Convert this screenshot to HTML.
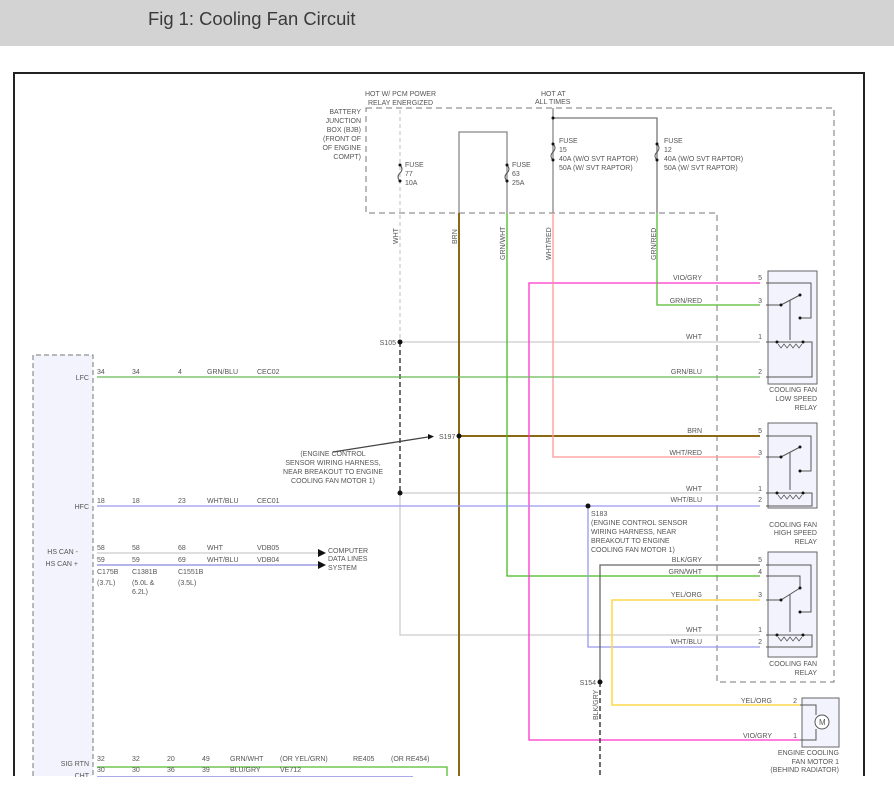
<!DOCTYPE html>
<html><head><meta charset="utf-8"><style>
html,body{margin:0;padding:0;background:#fff;width:894px;height:800px;overflow:hidden}
.hdr{position:absolute;left:0;top:0;width:894px;height:46px;background:#d3d3d3}
.hdr span{position:absolute;left:148px;top:8px;font:18.4px "Liberation Sans",sans-serif;color:#3a3a3a}
svg{position:absolute;left:0;top:0}
text{font-family:"Liberation Sans",sans-serif;font-size:7px;fill:#555}
</style></head><body>
<div class="hdr"><span>Fig 1: Cooling Fan Circuit</span></div>
<svg width="894" height="800" viewBox="0 0 894 800">
<path d="M14 776 V73 H864 V776" fill="none" stroke="#222" stroke-width="2"/>
<rect x="33" y="355" width="60" height="421" fill="#f3f3fd"/>
<path d="M33 776 V355 H93 V776" fill="none" stroke="#777" stroke-dasharray="5,3"/>
<path d="M366 108 H834 V682 H717 V213 H366 Z" fill="none" stroke="#777" stroke-dasharray="6,4"/>
<g fill="#f3f3fd" stroke="#666">
<rect x="768" y="271" width="49" height="113"/>
<rect x="768" y="423" width="49" height="85"/>
<rect x="768" y="552" width="49" height="105"/>
<rect x="802" y="698" width="37" height="49"/>
</g>
<g fill="none" stroke-width="1.3">
<path d="M400 110 V342" stroke="#ccc" stroke-dasharray="4,3"/>
<path d="M400 342 V493" stroke="#222" stroke-dasharray="5,3"/>
<path d="M400 493 V635 H760" stroke="#ccc"/>
<path d="M400 342 H760 M400 493 H760" stroke="#ccc"/>
<path d="M459 776 V132 H507 V213" stroke="#888" />
<path d="M459 213 V776 M459 436 H760" stroke="#8b6914" stroke-width="2"/>
<path d="M507 213 V576 H760" stroke="#44bb22"/>
<path d="M760 283 H529 V740 H800" stroke="#ff33cc"/>
<path d="M553 108 V213" stroke="#888"/>
<path d="M553 118 H657 V213" stroke="#777"/>
<path d="M553 213 V457 H760" stroke="#ff9999"/>
<path d="M657 213 V305 H760" stroke="#55bb33"/>
<path d="M97 377 H760" stroke="#66bb55"/>
<path d="M97 506 H760 M588 506 V647 H760" stroke="#9999ee"/>
<path d="M97 553 H318" stroke="#ccc"/>
<path d="M97 565 H318" stroke="#8888dd"/>
<path d="M760 565 H600 V682" stroke="#666"/>
<path d="M600 682 V776" stroke="#222" stroke-dasharray="5,3"/>
<path d="M760 600 H612 V705 H800" stroke="#ffd84a" stroke-width="1.5"/>
<path d="M97 767 H447 V776" stroke="#55bb33"/>
<path d="M97 777 H413" stroke="#7777dd"/>
<path d="M333 452 L428 437" stroke="#444"/>
</g>
<path d="M318 549 l8 4 l-8 4Z M318 561 l8 4 l-8 4Z M428 434 l6 2.5 l-6 3Z" fill="#111"/>
<g fill="none" stroke="#555"><path d="M400 165 q4 4 0 8 q-4 4 0 8"/><path d="M507 165 q4 4 0 8 q-4 4 0 8"/><path d="M553 144 q4 4 0 8 q-4 4 0 8"/><path d="M657 144 q4 4 0 8 q-4 4 0 8"/></g>
<g fill="#111">
<circle cx="400" cy="165" r="1.5"/><circle cx="400" cy="181" r="1.5"/><circle cx="507" cy="165" r="1.5"/><circle cx="507" cy="181" r="1.5"/>
<circle cx="553" cy="144" r="1.5"/><circle cx="553" cy="160" r="1.5"/><circle cx="657" cy="144" r="1.5"/><circle cx="657" cy="160" r="1.5"/><circle cx="553" cy="118" r="1.5"/>
<circle cx="400" cy="342" r="2.5"/><circle cx="400" cy="493" r="2.5"/><circle cx="459" cy="436" r="2.5"/><circle cx="588" cy="506" r="2.5"/><circle cx="600" cy="682" r="2.5"/>
</g>
<g fill="none" stroke="#555">
<path d="M766 283 H811 V318 H800 M766 305 H781 L800 295 M790 300 V340" />
<path d="M766 342 H803 H812 V377 H766"/>
<path d="M766 436 H811 V471 H800 M766 457 H781 L800 447 M790 452 V490"/>
<path d="M766 493 H812 V506 H766"/>
<path d="M766 565 H811 V612 H800 M766 576 H800 V588 M766 600 H781 L800 588 M790 594 V632"/>
<path d="M766 635 H812 V647 H766"/>
<path d="M800 705 H816 V715 M816 729 V740 H800"/>
<circle cx="822" cy="722" r="7" fill="#fff"/>
</g>
<g fill="none" stroke="#555" stroke-width=".8">
<path d="M778 344 l3 4 l3 -4 l3 4 l3 -4 l3 4 l3 -4 l3 4 l3 -4 M778 495 l3 4 l3 -4 l3 4 l3 -4 l3 4 l3 -4 l3 4 l3 -4 M778 637 l3 4 l3 -4 l3 4 l3 -4 l3 4 l3 -4 l3 4 l3 -4"/>
</g>
<g fill="#111">
<circle cx="781" cy="305" r="1.5"/><circle cx="800" cy="295" r="1.5"/><circle cx="800" cy="318" r="1.5"/><circle cx="777" cy="342" r="1.5"/><circle cx="803" cy="342" r="1.5"/>
<circle cx="781" cy="457" r="1.5"/><circle cx="800" cy="447" r="1.5"/><circle cx="800" cy="471" r="1.5"/><circle cx="777" cy="493" r="1.5"/><circle cx="803" cy="493" r="1.5"/>
<circle cx="781" cy="600" r="1.5"/><circle cx="800" cy="588" r="1.5"/><circle cx="800" cy="612" r="1.5"/><circle cx="777" cy="635" r="1.5"/><circle cx="803" cy="635" r="1.5"/>
</g>
<text x="819" y="725" style="font-size:8px">M</text>
<text x="365" y="96">HOT W/ PCM POWER</text><text x="368" y="105">RELAY ENERGIZED</text>
<text x="541" y="96">HOT AT</text><text x="535" y="104">ALL TIMES</text>
<g text-anchor="end"><text x="361" y="114">BATTERY</text><text x="361" y="123">JUNCTION</text><text x="361" y="132">BOX (BJB)</text><text x="361" y="141">(FRONT OF</text><text x="361" y="150">OF ENGINE</text><text x="361" y="159">COMPT)</text></g>
<text x="405" y="167">FUSE</text><text x="405" y="176">77</text><text x="405" y="185">10A</text>
<text x="512" y="167">FUSE</text><text x="512" y="176">63</text><text x="512" y="185">25A</text>
<text x="559" y="143">FUSE</text><text x="559" y="152">15</text><text x="559" y="161">40A  (W/O SVT RAPTOR)</text><text x="559" y="170">50A  (W/ SVT RAPTOR)</text>
<text x="664" y="143">FUSE</text><text x="664" y="152">12</text><text x="664" y="161">40A  (W/O SVT RAPTOR)</text><text x="664" y="170">50A  (W/ SVT RAPTOR)</text>
<g><text transform="translate(398,244) rotate(-90)">WHT</text><text transform="translate(457,244) rotate(-90)">BRN</text><text transform="translate(505,260) rotate(-90)">GRN/WHT</text><text transform="translate(551,260) rotate(-90)">WHT/RED</text><text transform="translate(656,260) rotate(-90)">GRN/RED</text><text transform="translate(598,720) rotate(-90)">BLK/GRY</text></g>
<text x="439" y="439">S197</text>
<g text-anchor="end">
<text x="702" y="280">VIO/GRY</text><text x="702" y="303">GRN/RED</text><text x="702" y="339">WHT</text><text x="702" y="374">GRN/BLU</text>
<text x="702" y="433">BRN</text><text x="702" y="455">WHT/RED</text><text x="702" y="491">WHT</text><text x="702" y="502">WHT/BLU</text>
<text x="702" y="562">BLK/GRY</text><text x="702" y="574">GRN/WHT</text><text x="702" y="597">YEL/ORG</text><text x="702" y="632">WHT</text><text x="702" y="644">WHT/BLU</text>
<text x="772" y="703">YEL/ORG</text><text x="772" y="738">VIO/GRY</text>
<text x="762" y="280">5</text><text x="762" y="303">3</text><text x="762" y="339">1</text><text x="762" y="374">2</text>
<text x="762" y="433">5</text><text x="762" y="455">3</text><text x="762" y="491">1</text><text x="762" y="502">2</text>
<text x="762" y="562">5</text><text x="762" y="574">4</text><text x="762" y="597">3</text><text x="762" y="632">1</text><text x="762" y="644">2</text>
<text x="797" y="703">2</text><text x="797" y="738">1</text>
<text x="817" y="392">COOLING FAN</text><text x="817" y="401">LOW SPEED</text><text x="817" y="410">RELAY</text>
<text x="817" y="527">COOLING FAN</text><text x="817" y="535">HIGH SPEED</text><text x="817" y="544">RELAY</text>
<text x="817" y="666">COOLING FAN</text><text x="817" y="675">RELAY</text>
<text x="839" y="755">ENGINE COOLING</text><text x="839" y="764">FAN MOTOR 1</text><text x="839" y="772">(BEHIND RADIATOR)</text>
<text x="396" y="345">S105</text><text x="596" y="685">S154</text>
<text x="89" y="380">LFC</text><text x="89" y="509">HFC</text><text x="78" y="554">HS CAN -</text><text x="78" y="566">HS CAN +</text><text x="89" y="766">SIG RTN</text><text x="89" y="778">CHT</text>
</g>
<g text-anchor="middle"><text x="333" y="456">(ENGINE CONTROL</text><text x="333" y="465">SENSOR WIRING HARNESS,</text><text x="333" y="474">NEAR BREAKOUT TO ENGINE</text><text x="333" y="483">COOLING FAN MOTOR 1)</text></g>
<text x="591" y="516">S183</text><text x="591" y="525">(ENGINE CONTROL SENSOR</text><text x="591" y="534">WIRING HARNESS, NEAR</text><text x="591" y="543">BREAKOUT TO ENGINE</text><text x="591" y="552">COOLING FAN MOTOR 1)</text>
<text x="328" y="553">COMPUTER</text><text x="328" y="561">DATA LINES</text><text x="328" y="570">SYSTEM</text>
<text x="97" y="374">34</text><text x="132" y="374">34</text><text x="178" y="374">4</text><text x="207" y="374">GRN/BLU</text><text x="257" y="374">CEC02</text>
<text x="97" y="503">18</text><text x="132" y="503">18</text><text x="178" y="503">23</text><text x="207" y="503">WHT/BLU</text><text x="257" y="503">CEC01</text>
<text x="97" y="550">58</text><text x="132" y="550">58</text><text x="178" y="550">68</text><text x="207" y="550">WHT</text><text x="257" y="550">VDB05</text>
<text x="97" y="562">59</text><text x="132" y="562">59</text><text x="178" y="562">69</text><text x="207" y="562">WHT/BLU</text><text x="257" y="562">VDB04</text>
<text x="97" y="574">C175B</text><text x="132" y="574">C1381B</text><text x="178" y="574">C1551B</text>
<text x="97" y="585">(3.7L)</text><text x="132" y="585">(5.0L &amp;</text><text x="132" y="594">6.2L)</text><text x="178" y="585">(3.5L)</text>
<text x="97" y="761">32</text><text x="132" y="761">32</text><text x="167" y="761">20</text><text x="202" y="761">49</text><text x="230" y="761">GRN/WHT</text><text x="280" y="761">(OR YEL/GRN)</text><text x="353" y="761">RE405</text><text x="391" y="761">(OR RE454)</text>
<text x="97" y="772">30</text><text x="132" y="772">30</text><text x="167" y="772">36</text><text x="202" y="772">39</text><text x="230" y="772">BLU/GRY</text><text x="280" y="772">VE712</text>
</svg>
<div style="position:absolute;left:0;top:777px;width:894px;height:23px;background:#fff"></div>
</body></html>
